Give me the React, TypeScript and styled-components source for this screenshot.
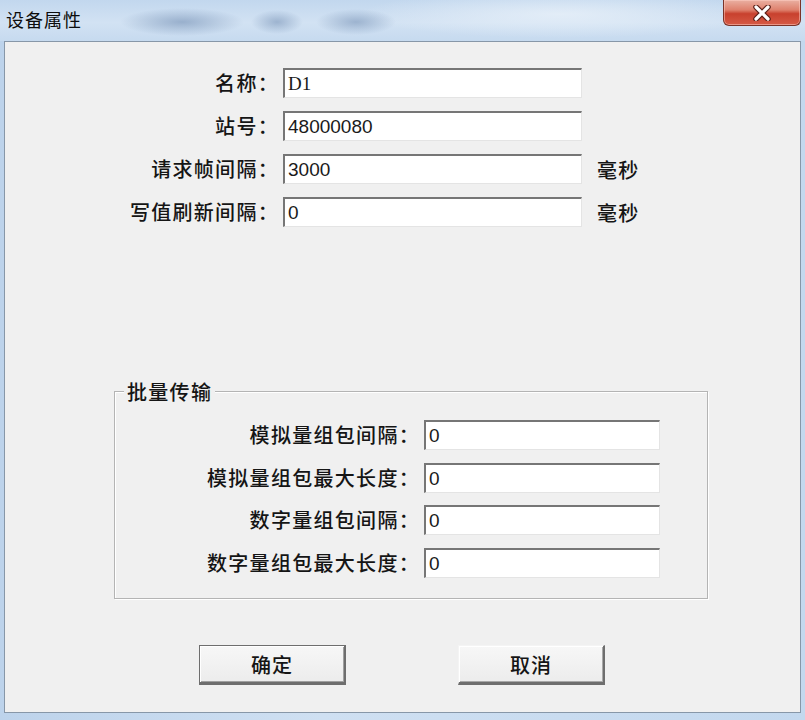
import React from 'react';
import styled, { createGlobalStyle } from 'styled-components';

const GlobalStyle = createGlobalStyle`
  html, body {
    margin: 0;
    padding: 0;
    background: #c9dcf0;
  }
  * {
    box-sizing: border-box;
  }
`;

const cjk = `"Noto Sans CJK SC", "Noto Sans", sans-serif`;

const Window = styled.div`
  width: 805px;
  height: 720px;
  display: flex;
  flex-direction: column;
  background: linear-gradient(90deg, #bdd3eb 0%, #cfe0f2 40%, #c3d8ee 100%);
  font-family: ${cjk};
  color: #151515;
  overflow: hidden;
`;

const TitleBar = styled.div`
  height: 41px;
  flex-shrink: 0;
  display: flex;
  justify-content: space-between;
  align-items: flex-start;
  padding: 0 4px 0 6px;
  background:
    radial-gradient(ellipse 62px 14px at 182px 22px, rgba(128, 154, 188, 0.7), rgba(128, 154, 188, 0) 100%),
    radial-gradient(ellipse 26px 12px at 277px 22px, rgba(128, 154, 188, 0.65), rgba(128, 154, 188, 0) 100%),
    radial-gradient(ellipse 40px 13px at 356px 22px, rgba(128, 154, 188, 0.65), rgba(128, 154, 188, 0) 100%),
    radial-gradient(ellipse 200px 24px at 560px 14px, rgba(236, 243, 250, 0.7), rgba(236, 243, 250, 0) 100%),
    linear-gradient(180deg, #c2d7ee 0%, #d2e2f3 55%, #c6daef 100%);
`;

const Title = styled.div`
  font-size: 18px;
  line-height: 38px;
  letter-spacing: 1px;
  color: #0c0c0c;
`;

const CloseButton = styled.div`
  width: 78px;
  height: 26px;
  display: flex;
  align-items: center;
  justify-content: center;
  border: 1px solid #7a3328;
  border-top: none;
  border-radius: 0 0 6px 6px;
  background: linear-gradient(180deg, #eab0a2 0%, #de806c 40%, #c8412e 55%, #d65a45 100%);
  box-shadow: inset 0 0 0 1px rgba(255, 210, 200, 0.5);
`;

const Client = styled.div`
  flex: 1;
  margin: 0 4px 7px;
  border: 1px solid #8797a8;
  background: #f0f0f0;
  display: flex;
  flex-direction: column;
  padding-top: 26px;
`;

const FormGrid = styled.div`
  display: grid;
  grid-template-columns: 274px 299px auto;
  grid-auto-rows: 30px;
  column-gap: 4px;
  row-gap: 13px;
  align-items: center;
`;

const Label = styled.div`
  text-align: right;
  font-size: 20px;
  letter-spacing: 1.3px;
  font-weight: 500;
  white-space: nowrap;
  line-height: 30px;
`;

const Input = styled.div<{ $serif?: boolean }>`
  height: 30px;
  background: #fff;
  border-top: 2px solid #767676;
  border-left: 2px solid #767676;
  border-right: 1px solid #e4e4e4;
  border-bottom: 1px solid #e4e4e4;
  padding-left: 3px;
  font-family: ${(p) => (p.$serif ? `"Liberation Serif", serif` : `"Liberation Sans", sans-serif`)};
  font-size: 19px;
  line-height: 27px;
  color: #1a1a1a;
`;

const Unit = styled.div`
  padding-left: 11px;
  font-size: 20px;
  letter-spacing: 1.3px;
  font-weight: 500;
`;

const Group = styled.div`
  position: relative;
  margin: 164px 0 0 109px;
  width: 594px;
  border: 1px solid #b4b4b4;
  box-shadow: inset 1px 1px 0 #fff, 1px 1px 0 #fff;
  padding: 28px 0 20px;
`;

const Legend = styled.div`
  position: absolute;
  top: -12px;
  left: 9px;
  padding: 0 3px;
  background: #f0f0f0;
  font-size: 20px;
  letter-spacing: 1.3px;
  font-weight: 500;
  line-height: 24px;
`;

const GroupGrid = styled.div`
  display: grid;
  grid-template-columns: 305px 236px;
  grid-auto-rows: 30px;
  column-gap: 4px;
  row-gap: 12.7px;
  align-items: center;
`;

const ButtonRow = styled.div`
  display: flex;
  gap: 112px;
  margin: 46px 0 0 194px;
`;

const Button = styled.div<{ $default?: boolean }>`
  width: 147px;
  height: 40px;
  display: flex;
  align-items: center;
  justify-content: center;
  font-size: 20px;
  letter-spacing: 1px;
  font-weight: 500;
  background: linear-gradient(180deg, #f7f7f7 0%, #ececec 100%);
  border-top: 1px solid ${(p) => (p.$default ? '#6e6e6e' : '#f4f4f4')};
  border-left: 1px solid ${(p) => (p.$default ? '#6e6e6e' : '#f4f4f4')};
  border-right: 2px solid #6e6e6e;
  border-bottom: 3px solid #6e6e6e;
  box-shadow: ${(p) =>
    p.$default ? 'inset 1px 1px 0 #fff, inset -1px -1px 0 #a0a0a0' : 'inset 1px 1px 0 #fff, inset -1px -1px 0 #a8a8a8'};
`;

const CloseIcon = () => (
  <svg width="18" height="16" viewBox="0 0 18 16">
    <path d="M3 2 L15 14 M15 2 L3 14" stroke="#5a1e16" strokeWidth="5.5" strokeLinecap="round" />
    <path d="M3 2 L15 14 M15 2 L3 14" stroke="#fff" strokeWidth="3.2" strokeLinecap="round" />
  </svg>
);

const mainRows = [
  { label: '名称：', value: 'D1', serif: true },
  { label: '站号：', value: '48000080' },
  { label: '请求帧间隔：', value: '3000', unit: '毫秒' },
  { label: '写值刷新间隔：', value: '0', unit: '毫秒' },
];

const batchRows = [
  { label: '模拟量组包间隔：', value: '0' },
  { label: '模拟量组包最大长度：', value: '0' },
  { label: '数字量组包间隔：', value: '0' },
  { label: '数字量组包最大长度：', value: '0' },
];

export default function App() {
  return (
    <>
      <GlobalStyle />
      <Window>
        <TitleBar>
          <Title>设备属性</Title>
          <CloseButton>
            <CloseIcon />
          </CloseButton>
        </TitleBar>
        <Client>
          <FormGrid>
            {mainRows.map((r) => (
              <React.Fragment key={r.label}>
                <Label>{r.label}</Label>
                <Input $serif={r.serif}>{r.value}</Input>
                <Unit>{r.unit ?? ''}</Unit>
              </React.Fragment>
            ))}
          </FormGrid>
          <Group>
            <Legend>批量传输</Legend>
            <GroupGrid>
              {batchRows.map((r) => (
                <React.Fragment key={r.label}>
                  <Label>{r.label}</Label>
                  <Input>{r.value}</Input>
                </React.Fragment>
              ))}
            </GroupGrid>
          </Group>
          <ButtonRow>
            <Button $default>确定</Button>
            <Button>取消</Button>
          </ButtonRow>
        </Client>
      </Window>
    </>
  );
}
